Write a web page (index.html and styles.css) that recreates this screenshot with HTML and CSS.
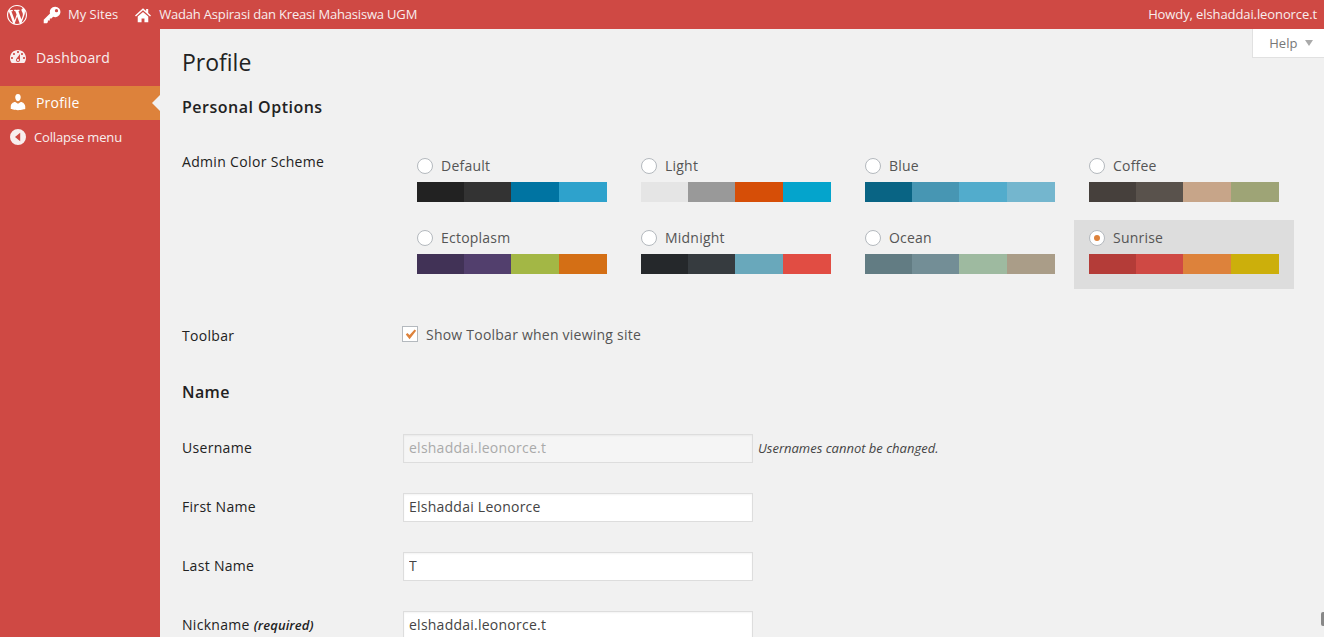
FILE: index.html
```html
<!DOCTYPE html>
<html lang="en">
<head>
<meta charset="utf-8">
<title>Profile</title>
<link rel="stylesheet" href="styles.css">
</head>
<body>
<header class="adminbar">
  <div class="bar-left">
    <svg class="bar-wp" viewBox="0 0 20 20"><path d="M20 10c0-5.51-4.49-10-10-10C4.48 0 0 4.49 0 10c0 5.52 4.48 10 10 10 5.51 0 10-4.48 10-10zM7.78 15.37L4.37 6.22c.55-.02 1.17-.08 1.17-.08.5-.06.44-1.13-.06-1.11 0 0-1.45.11-2.37.11-.18 0-.37 0-.58-.01C4.12 2.69 6.87 1.11 10 1.11c2.33 0 4.45.87 6.05 2.34-.68-.11-1.65.39-1.65 1.58 0 .74.45 1.36.9 2.1.35.61.55 1.36.55 2.46 0 1.49-1.4 5-1.4 5l-3.03-8.37c.54-.02.82-.17.82-.17.5-.05.44-1.25-.06-1.22 0 0-1.44.12-2.38.12-.87 0-2.33-.12-2.33-.12-.5-.03-.56 1.2-.06 1.22l.92.08 1.26 3.41zM17.41 10c.24-.64.74-1.87.43-4.25.7 1.29 1.05 2.71 1.05 4.25 0 3.29-1.73 6.24-4.4 7.78.97-2.59 1.94-5.2 2.92-7.78zM6.1 18.09C3.12 16.65 1.11 13.53 1.11 10c0-1.3.23-2.48.72-3.59C3.25 10.3 4.67 14.2 6.1 18.09zm4.03-6.63l2.58 6.98c-.86.29-1.76.45-2.71.45-.79 0-1.57-.11-2.29-.33.81-2.38 1.62-4.74 2.42-7.1z"/></svg>
    <svg class="bar-key" viewBox="0 0 20 20"><path d="M13.4 .8a5.8 5.8 0 0 0-5.6 7.4L.8 15.4V19.2h3.4l1.2-1.2V16h2.2v-2.2h1.8l1.8-1.9a5.8 5.8 0 1 0 2.2-11.1zm1.6 2.6a1.8 1.8 0 1 1 0 3.6 1.8 1.8 0 0 1 0-3.6z" fill-rule="evenodd"/></svg>
    <span class="bar-text bar-sites">My Sites</span>
    <svg class="bar-home" viewBox="0 0 20 20"><path d="M10 1.5 0 10.6l1.2 1.3L10 4l8.8 7.9 1.2-1.3-3.5-3.2V2.5h-2.6v2.5zM3.4 12v7h4.8v-4.6h3.6V19h4.8v-7L10 6.1z"/></svg>
    <span class="bar-text bar-site-name">Wadah Aspirasi dan Kreasi Mahasiswa UGM</span>
  </div>
  <span class="bar-text bar-howdy">Howdy, elshaddai.leonorce.t</span>
</header>
<div class="layout">
  <nav class="sidebar">
    <a class="menu-item menu-dash">
      <svg class="menu-icon" viewBox="0 0 20 20"><path fill-rule="evenodd" d="M3.76 16h12.48c1.1-1.37 1.76-3.11 1.76-5 0-4.42-3.58-8-8-8s-8 3.58-8 8c0 1.89.66 3.63 1.76 5zM10 4c.55 0 1 .45 1 1s-.45 1-1 1-1-.45-1-1 .45-1 1-1zM6 6c.55 0 1 .45 1 1s-.45 1-1 1-1-.45-1-1 .45-1 1-1zm8 0c.55 0 1 .45 1 1s-.45 1-1 1-1-.45-1-1 .45-1 1-1zm-5.37 5.55L12 7v6c0 1.1-.9 2-2 2s-2-.9-2-2c0-.57.24-1.08.63-1.45zM4 10c.55 0 1 .45 1 1s-.45 1-1 1-1-.45-1-1 .45-1 1-1zm12 0c.55 0 1 .45 1 1s-.45 1-1 1-1-.45-1-1 .45-1 1-1zm-5 3c0-.55-.45-1-1-1s-1 .45-1 1 .45 1 1 1 1-.45 1-1z"/></svg>
      Dashboard
    </a>
    <a class="menu-item menu-active">
      <svg class="menu-icon" viewBox="0 0 20 20"><path d="M10 9.25c-2.27 0-2.73-3.44-2.73-3.44C7 4.02 7.82 2 9.97 2c2.16 0 2.98 2.02 2.71 3.81 0 0-.41 3.44-2.68 3.44zm0 2.57L12.72 10c2.39 0 4.52 2.33 4.52 4.53v2.49s-3.65 1.13-7.24 1.13c-3.65 0-7.24-1.13-7.24-1.13v-2.49c0-2.25 1.94-4.48 4.47-4.48z"/></svg>
      Profile
    </a>
    <a class="menu-collapse">
      <svg class="collapse-icon" viewBox="0 0 16 16"><path fill-rule="evenodd" d="M8 0a8 8 0 1 1 0 16A8 8 0 0 1 8 0zm2.2 3.8L5 8l5.2 4.2z"/></svg>
      Collapse menu
    </a>
  </nav>
  <main class="content">
    <button class="help-tab" type="button">Help <span class="help-arrow"></span></button>
    <h1 class="page-title">Profile</h1>
    <h2 class="section-title">Personal Options</h2>
    <div class="row row-scheme">
      <div class="row-label">Admin Color Scheme</div>
      <div class="schemes">
        <div class="scheme"><div class="scheme-head"><span class="radio"></span>Default</div><div class="swatches"><i class="sw" style="background:#222"></i><i class="sw" style="background:#333"></i><i class="sw" style="background:#0074a2"></i><i class="sw" style="background:#2ea2cc"></i></div></div>
        <div class="scheme"><div class="scheme-head"><span class="radio"></span>Light</div><div class="swatches"><i class="sw" style="background:#e5e5e5"></i><i class="sw" style="background:#999"></i><i class="sw" style="background:#d64e07"></i><i class="sw" style="background:#04a4cc"></i></div></div>
        <div class="scheme"><div class="scheme-head"><span class="radio"></span>Blue</div><div class="swatches"><i class="sw" style="background:#096484"></i><i class="sw" style="background:#4796b3"></i><i class="sw" style="background:#52accc"></i><i class="sw" style="background:#74b6ce"></i></div></div>
        <div class="scheme"><div class="scheme-head"><span class="radio"></span>Coffee</div><div class="swatches"><i class="sw" style="background:#46403c"></i><i class="sw" style="background:#59524c"></i><i class="sw" style="background:#c7a589"></i><i class="sw" style="background:#9ea476"></i></div></div>
        <div class="scheme"><div class="scheme-head"><span class="radio"></span>Ectoplasm</div><div class="swatches"><i class="sw" style="background:#413256"></i><i class="sw" style="background:#523f6d"></i><i class="sw" style="background:#a3b745"></i><i class="sw" style="background:#d46f15"></i></div></div>
        <div class="scheme"><div class="scheme-head"><span class="radio"></span>Midnight</div><div class="swatches"><i class="sw" style="background:#25282b"></i><i class="sw" style="background:#363b3f"></i><i class="sw" style="background:#69a8bb"></i><i class="sw" style="background:#e14d43"></i></div></div>
        <div class="scheme"><div class="scheme-head"><span class="radio"></span>Ocean</div><div class="swatches"><i class="sw" style="background:#627c83"></i><i class="sw" style="background:#738e96"></i><i class="sw" style="background:#9ebaa0"></i><i class="sw" style="background:#aa9d88"></i></div></div>
        <div class="scheme scheme-selected"><div class="scheme-head"><span class="radio radio-on"></span>Sunrise</div><div class="swatches"><i class="sw" style="background:#b43c38"></i><i class="sw" style="background:#cf4944"></i><i class="sw" style="background:#dd823b"></i><i class="sw" style="background:#ccaf0b"></i></div></div>
      </div>
    </div>
    <div class="row row-toolbar">
      <div class="row-label">Toolbar</div>
      <label class="check-line"><span class="checkbox"><svg viewBox="0 0 16 16"><path d="M3 8l1.6-1.6L7 8.6 12.4 2.6 14 4 7 13z"/></svg></span>Show Toolbar when viewing site</label>
    </div>
    <h2 class="section-title section-name">Name</h2>
    <div class="row row-field">
      <div class="row-label">Username</div>
      <input class="field" type="text" value="elshaddai.leonorce.t" disabled>
      <span class="hint">Usernames cannot be changed.</span>
    </div>
    <div class="row row-field">
      <div class="row-label">First Name</div>
      <input class="field" type="text" value="Elshaddai Leonorce">
    </div>
    <div class="row row-field">
      <div class="row-label">Last Name</div>
      <input class="field" type="text" value="T">
    </div>
    <div class="row row-field">
      <div class="row-label">Nickname <em class="req">(required)</em></div>
      <input class="field" type="text" value="elshaddai.leonorce.t">
    </div>
  </main>
</div>
<span class="cursor-mark"></span>
</body>
</html>
```
FILE: styles.css
```css
* { box-sizing: border-box; }
html, body { margin: 0; height: 100%; overflow: hidden; }
body { background: #f1f1f1; color: #444; font-family: "Open Sans", sans-serif; font-size: 14px; }

.adminbar { height: 29px; background: #cf4944; color: #fff; display: flex; justify-content: space-between; align-items: center; padding: 0 7px 0 7px; }
.bar-left { display: flex; align-items: center; }
.bar-left svg { fill: #fff; flex: none; }
.bar-text { font-size: 13px; line-height: 29px; color: #f8eeee; white-space: nowrap; }
.bar-wp { width: 20px; height: 20px; margin-right: 16px; }
.bar-key { width: 18px; height: 18px; margin-right: 7px; }
.bar-sites { margin-right: 17px; }
.bar-home { width: 16px; height: 16px; margin-right: 8px; }
.bar-site-name { letter-spacing: -.18px; }
.bar-howdy { letter-spacing: -.1px; }

.layout { display: flex; height: 608px; }
.sidebar { width: 160px; flex: none; background: #cf4944; padding-top: 11px; color: #fff; }
.menu-item { display: flex; align-items: center; height: 34px; padding-left: 8px; font-size: 14px; letter-spacing: .2px; color: #f8eeee; position: relative; }
.menu-icon { width: 20px; height: 20px; fill: #f8eeee; margin-right: 8px; flex: none; }
.menu-dash { margin-bottom: 12px; }
.menu-active { background: #dd823b; color: #fff; padding-bottom: 2px; }
.menu-active .menu-icon { fill: #fff; }
.menu-active::after { content: ""; position: absolute; right: 0; top: 9px; border: 8px solid transparent; border-right-color: #f1f1f1; border-left-width: 0; }
.menu-collapse { display: flex; align-items: center; height: 34px; padding-left: 10px; font-size: 13px; letter-spacing: -.15px; color: #f8eeee; }
.collapse-icon { width: 16px; height: 16px; fill: #f8eeee; margin-right: 8px; flex: none; }

.content { flex: 1; min-width: 0; padding-left: 22px; position: relative; color: #222; }
.help-tab { position: absolute; top: 0; right: 0; width: 72px; height: 29px; padding: 0 0 0 5px; background: #fff; border: 1px solid #e1e1e1; border-top: 0; border-right: 0; color: #777; font: 13px "Open Sans", sans-serif; }
.help-arrow { display: inline-block; margin-left: 4px; vertical-align: 2px; border: 4px solid transparent; border-top: 6px solid #aaa; border-bottom: 0; }
.page-title { margin: 0; padding-top: 17px; font-size: 23px; line-height: 33px; font-weight: 400; color: #222; }
.section-title { margin: 0; font-size: 16px; line-height: 22px; font-weight: 600; color: #222; letter-spacing: .5px; }
.page-title + .section-title { margin-top: 17px; }
.section-name { margin-top: 34px; letter-spacing: .4px; }

.row { display: grid; grid-template-columns: 221px auto 1fr; }
.row-label { font-size: 14px; color: #222; line-height: 20px; white-space: nowrap; letter-spacing: .3px; }
.row-scheme { margin-top: 35px; display: flex; }
.row-scheme .row-label { width: 220px; flex: none; margin-top: -1px; letter-spacing: .33px; }
.schemes { display: grid; grid-template-columns: repeat(4, 220px); column-gap: 4px; row-gap: 3px; margin-top: -5px; }
.scheme { height: 69px; padding: 10px 15px 0; }
.scheme-selected { background: #ddd; }
.scheme-head { display: flex; align-items: flex-start; height: 16px; line-height: 16px; color: #555; font-size: 14px; letter-spacing: .22px; }
.radio { width: 16px; height: 16px; border-radius: 50%; background: #fff; border: 1px solid #b4b9be; margin-right: 8px; flex: none; display: flex; align-items: center; justify-content: center; }
.radio-on::before { content: ""; width: 6px; height: 6px; border-radius: 50%; background: #dd823b; }
.swatches { display: grid; grid-template-columns: 47px 47px 48px 48px; height: 20px; margin-top: 8px; }
.sw { display: block; }

.row-toolbar { margin-top: 35px; align-items: start; height: 23px; }
.row-toolbar .row-label { padding-top: 2px; }
.check-line { display: flex; align-items: center; height: 20px; margin-left: -1px; color: #555; font-size: 14px; white-space: nowrap; letter-spacing: .23px; }
.checkbox { width: 16px; height: 16px; background: #fff; border: 1px solid #b4b9be; margin-right: 8px; flex: none; }
.checkbox svg { display: block; width: 15px; height: 15px; fill: #dd823b; }

.row-field { margin-bottom: 30px; align-items: center; }
.row-field .row-label { padding-bottom: 2px; }
.hint { padding-bottom: 2px; }
.section-name + .row-field { margin-top: 31px; }
.field { width: 350px; height: 29px; padding: 0 5px 2px; margin: 0; background: #fff; border: 1px solid #ddd; border-radius: 0; outline: 0; font: 14px "Open Sans", sans-serif; letter-spacing: .24px; color: #444; box-shadow: inset 0 1px 2px rgba(0,0,0,.05); }
.field:disabled { background: #f5f5f5; color: #aaa; }
.hint { padding-left: 5px; font-size: 13px; font-style: italic; color: #444; }
.req { font-size: 13px; font-weight: 600; letter-spacing: .1px; }

.cursor-mark { position: absolute; left: 1321px; top: 612px; width: 3px; height: 14px; background: #888; border-radius: 2px 0 0 2px; }
```
